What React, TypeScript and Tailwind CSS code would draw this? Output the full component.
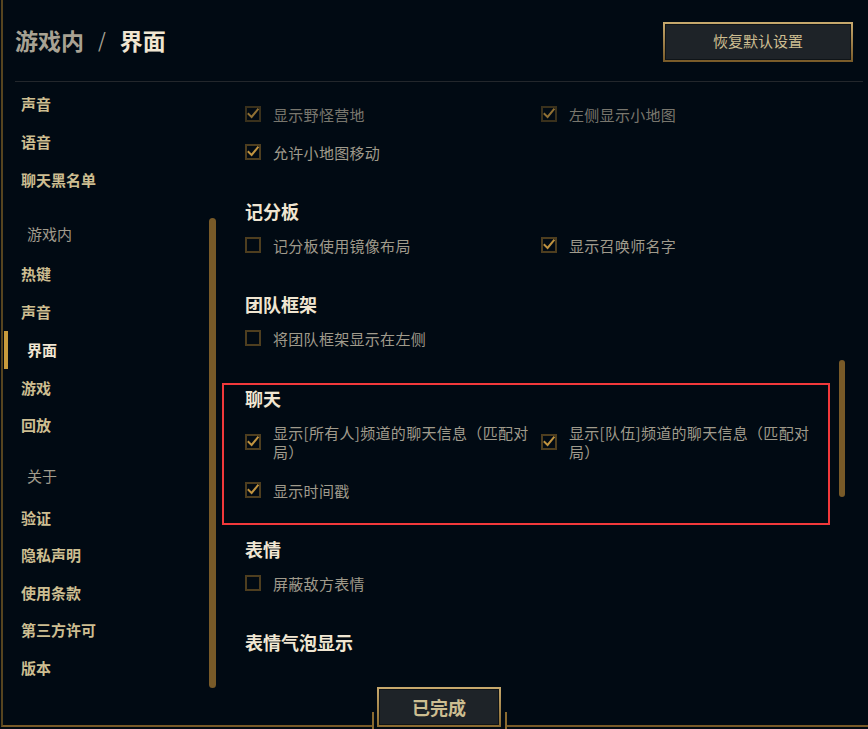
import React from "react";

const Check = ({ checked }: { checked: boolean }) => (
  <div className="w-[16px] h-[16px] shrink-0 border-2 border-[#4e3e1f] flex items-center justify-center">
    {checked && (
      <svg width="12" height="12" viewBox="0 0 12 12" className="overflow-visible">
        <polyline points="1.5,6 4.6,9 10.8,1.4" fill="none" stroke="#c09340" strokeWidth="2" strokeLinecap="square" />
      </svg>
    )}
  </div>
);

const Opt = ({ checked, children }: { checked: boolean; children: React.ReactNode }) => (
  <div className="flex items-center gap-[12px]">
    <Check checked={checked} />
    <div className="text-[15px] leading-[19px] tracking-[0.3px] text-[#a09b8c] whitespace-nowrap">{children}</div>
  </div>
);

const Heading = ({ children, className = "" }: { children: React.ReactNode; className?: string }) => (
  <div className={"h-[28px] flex items-center pb-[2px] text-[18px] font-bold text-[#f0e6d2] " + className}>{children}</div>
);

const NavItem = ({ label, selected = false, h = "h-[38px]" }: { label: string; selected?: boolean; h?: string }) => (
  <div className={h + " flex items-stretch"}>
    <div className={"w-[4px] ml-[1px] " + (selected ? "bg-[#c89b3c]" : "")} />
    <div
      className={
        "flex items-center text-[15px] font-bold leading-[20px] " +
        (selected ? "ml-[19px] text-[#f0e6d2]" : "ml-[13px] text-[#cdbe91]")
      }
    >
      {label}
    </div>
  </div>
);

const NavHeader = ({ label, pb }: { label: string; pb: string }) => (
  <div className={"h-[56px] flex items-end " + pb}>
    <div className="ml-[24px] text-[15px] leading-[20px] text-[#a09b8c]">{label}</div>
  </div>
);

export default function App() {
  return (
    <div
      className="w-[868px] h-[729px] bg-[#010a13] relative overflow-hidden"
      style={{ fontFamily: '"Noto Sans CJK SC", "Noto Sans", sans-serif' }}
    >
      <div className="h-[727px] ml-[1px] border-l-2 border-b-2 border-l-[#56441f] border-b-[#785a28] flex flex-col">
        {/* header */}
        <div className="h-[81px] shrink-0 flex items-center justify-between pl-[12px] pr-[15px]">
          <div className="flex items-center text-[23px] font-bold leading-[30px] mt-[-1px]">
            <span className="text-[#a8a293]">游戏内</span>
            <span className="text-[#a8a293] mx-[14px] font-normal text-[20px]">/</span>
            <span className="text-[#f0e6d2]">界面</span>
          </div>
          <div className="w-[190px] h-[40px] p-[2px] bg-gradient-to-b from-[#c8aa6e] to-[#785a28] mt-[2px]">
            <div className="w-full h-full bg-[#1e2328] border border-[#0f1418] flex items-center justify-center text-[15px] text-[#cdbe91]">
              恢复默认设置
            </div>
          </div>
        </div>
        <div className="h-px bg-[#23272c] ml-[12px] mr-[5px] shrink-0" />

        {/* body */}
        <div className="flex flex-1 min-h-0">
          {/* sidebar */}
          <div className="w-[213px] flex shrink-0">
            <div className="flex-1 flex flex-col pt-[3px]">
              <NavItem label="声音" />
              <NavItem label="语音" />
              <NavItem label="聊天黑名单" />
              <NavHeader label="游戏内" pb="pb-[11px]" />
              <NavItem label="热键" />
              <NavItem label="声音" />
              <NavItem label="界面" selected />
              <NavItem label="游戏" h="h-[37px]" />
              <NavItem label="回放" h="h-[37px]" />
              <NavHeader label="关于" pb="pb-[13px]" />
              <NavItem label="验证" h="h-[37px]" />
              <NavItem label="隐私声明" h="h-[38px]" />
              <NavItem label="使用条款" h="h-[37px]" />
              <NavItem label="第三方许可" h="h-[38px]" />
              <NavItem label="版本" h="h-[37px]" />
            </div>
            <div className="w-[7px] mt-[136px] h-[470px] rounded-full bg-[#785a28]" />
          </div>

          {/* content */}
          <div className="w-[623px] pl-[29px] pt-[13px] flex flex-col shrink-0">
            <div className="grid grid-cols-[296px_1fr] h-[38px] items-center opacity-75">
              <Opt checked>显示野怪营地</Opt>
              <Opt checked>左侧显示小地图</Opt>
            </div>
            <div className="h-[38px] flex items-center">
              <Opt checked>允许小地图移动</Opt>
            </div>

            <Heading className="mt-[27px]">记分板</Heading>
            <div className="grid grid-cols-[296px_1fr] h-[38px] items-center">
              <Opt checked={false}>记分板使用镜像布局</Opt>
              <Opt checked>显示召唤师名字</Opt>
            </div>

            <Heading className="mt-[27px]">团队框架</Heading>
            <div className="h-[38px] flex items-center">
              <Opt checked={false}>将团队框架显示在左侧</Opt>
            </div>

            <div className="mt-[26px] ml-[-23px] w-[608px] border-2 border-[#f2393b] pl-[21px] pb-[14px]">
              <Heading>聊天</Heading>
              <div className="grid grid-cols-[296px_1fr] h-[58px] items-center">
                <Opt checked>
                  显示[所有人]频道的聊天信息（匹配对
                  <br />
                  局）
                </Opt>
                <Opt checked>
                  显示[队伍]频道的聊天信息（匹配对
                  <br />
                  局）
                </Opt>
              </div>
              <div className="h-[38px] flex items-center">
                <Opt checked>显示时间戳</Opt>
              </div>
            </div>

            <Heading className="mt-[11px]">表情</Heading>
            <div className="h-[38px] flex items-center">
              <Opt checked={false}>屏蔽敌方表情</Opt>
            </div>

            <Heading className="mt-[27px]">表情气泡显示</Heading>
          </div>

          <div className="w-[6px] mt-[278px] h-[137px] rounded-full bg-[#785a28] shrink-0" />
        </div>
      </div>

      {/* bottom done button */}
      <div className="absolute left-[372px] top-[712px] w-[135px] h-[17px] bg-[#010a13] border-l-2 border-r-2 border-[#8a6a30]" />
      <div className="absolute left-[377px] top-[687px] w-[124px] h-[40px] p-[2px] bg-gradient-to-b from-[#c8aa6e] to-[#8a6a30]">
        <div className="w-full h-full bg-[#1e2328] border border-[#0f1418] flex items-center justify-center text-[18px] font-bold text-[#cdbe91]">
          已完成
        </div>
      </div>
    </div>
  );
}
